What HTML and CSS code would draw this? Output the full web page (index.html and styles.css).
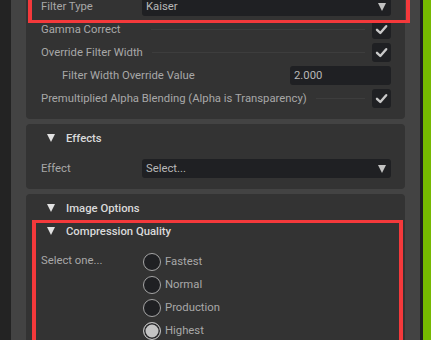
FILE: index.html
```html
<!DOCTYPE html>
<html lang="en">

<head>
    <meta charset="UTF-8">
    <meta name="viewport" content="width=device-width, initial-scale=1.0">
    <title>Texture Settings</title>
    <link rel="stylesheet" href="styles.css">
</head>

<body>

    <div id="app">
        <div class="edge-dark"></div>

        <!-- Property panel -->
        <div id="frame">

            <!-- Filter settings -->
            <div class="card card-filter">
                <div class="row">
                    <span class="label">Filter Type</span>
                    <div class="combo"><span>Kaiser</span><span class="arrow"></span></div>
                </div>
                <div class="row">
                    <span class="label">Gamma Correct</span>
                    <span class="rule"></span>
                    <span class="check">
                        <svg width="19" height="19" viewBox="0 0 19 19"><path d="M5 9.8 L8.3 13 L14.2 6.2" fill="none" stroke="#c9c9c9" stroke-width="2.4" stroke-linecap="round" stroke-linejoin="round"/></svg>
                    </span>
                </div>
                <div class="row">
                    <span class="label">Override Filter Width</span>
                    <span class="rule"></span>
                    <span class="check">
                        <svg width="19" height="19" viewBox="0 0 19 19"><path d="M5 9.8 L8.3 13 L14.2 6.2" fill="none" stroke="#c9c9c9" stroke-width="2.4" stroke-linecap="round" stroke-linejoin="round"/></svg>
                    </span>
                </div>
                <div class="row">
                    <span class="label indent">Filter Width Override Value</span>
                    <span class="spacer"></span>
                    <div class="field">2.000</div>
                </div>
                <div class="row">
                    <span class="label">Premultiplied Alpha Blending (Alpha is Transparency)</span>
                    <span class="rule"></span>
                    <span class="check">
                        <svg width="19" height="19" viewBox="0 0 19 19"><path d="M5 9.8 L8.3 13 L14.2 6.2" fill="none" stroke="#c9c9c9" stroke-width="2.4" stroke-linecap="round" stroke-linejoin="round"/></svg>
                    </span>
                </div>
                <div class="highlight hl-filter"></div>
            </div>

            <!-- Effects -->
            <div class="card">
                <div class="header"><span class="tri"></span>Effects</div>
                <div class="row">
                    <span class="label">Effect</span>
                    <div class="combo"><span>Select...</span><span class="arrow"></span></div>
                </div>
            </div>

            <!-- Image options -->
            <div class="card card-image">
                <div class="header"><span class="tri"></span>Image Options</div>
                <div class="header sub"><span class="tri"></span>Compression Quality</div>
                <div class="choice">
                    <span class="label top">Select one...</span>
                    <div class="radios">
                        <div class="radio-row"><span class="radio"></span>Fastest</div>
                        <div class="radio-row"><span class="radio"></span>Normal</div>
                        <div class="radio-row"><span class="radio"></span>Production</div>
                        <div class="radio-row"><span class="radio on"></span>Highest</div>
                    </div>
                </div>
                <div class="highlight hl-quality"></div>
            </div>

        </div>

        <div class="edge-gap"></div>
        <div class="edge-green"></div>
    </div>

</body>

</html>
```

FILE: styles.css
```css
body {
    margin: 0;
    font-family: Roboto, "Liberation Sans", sans-serif;
    font-size: 11.3px;
    background-color: #232323;
    overflow: hidden;
}

#app {
    display: flex;
    height: 340px;
    overflow: hidden;
}

.edge-dark {
    width: 11px;
    background-color: #232323;
}

#frame {
    flex: 1;
    background-color: #434343;
    padding: 0 15px;
    display: flex;
    flex-direction: column;
    gap: 5px;
}

.edge-gap {
    width: 3px;
    background-color: #1e1e20;
}

.edge-green {
    width: 8px;
    background-color: #76b900;
}

/* Cards */
.card {
    position: relative;
    background-color: #333333;
    border-radius: 4px;
    padding: 4px 14px 11px 15px;
    display: flex;
    flex-direction: column;
    gap: 4px;
    flex-shrink: 0;
}

.card-filter {
    margin-top: -7px;
}

.row {
    display: flex;
    align-items: center;
    height: 19px;
}

.label {
    color: #a8a8a8;
    width: 101px;
    flex-shrink: 0;
    white-space: nowrap;
}

.row .label {
    width: auto;
    min-width: 101px;
}

.label.indent {
    padding-left: 21px;
}

.rule {
    flex: 1;
    height: 1px;
    background-color: #3d3d3d;
    margin: 0 7px 0 9px;
}

.spacer {
    flex: 1;
}

.check {
    width: 19px;
    height: 19px;
    border-radius: 3px;
    background-color: #1f2023;
    display: flex;
}

.combo {
    flex: 1;
    height: 19px;
    border-radius: 3px;
    background-color: #1f2023;
    color: #b8b8b8;
    display: flex;
    align-items: center;
    justify-content: space-between;
    padding: 0 5px 0 4px;
}

.arrow {
    width: 0;
    height: 0;
    border-left: 4.5px solid transparent;
    border-right: 4.5px solid transparent;
    border-top: 8px solid #c2c2c2;
}

.field {
    width: 97px;
    height: 19px;
    border-radius: 3px;
    background-color: #1f2023;
    color: #b8b8b8;
    padding-left: 4px;
    line-height: 19px;
}

/* Collapsible headers */
.header {
    display: flex;
    align-items: center;
    height: 20px;
    color: #dadada;
    font-weight: 500;
    margin-bottom: 7px;
}

.header.sub {
    margin-top: -8px;
}

.tri {
    width: 0;
    height: 0;
    margin: 0 11px 0 6px;
    border-left: 4px solid transparent;
    border-right: 4px solid transparent;
    border-top: 8px solid #e2e2e2;
}

/* Radio group */
.choice {
    display: flex;
}

.label.top {
    line-height: 16px;
    padding-top: 1px;
}

.radios {
    display: flex;
    flex-direction: column;
    gap: 4px;
    padding-left: 1px;
}

.radio-row {
    display: flex;
    align-items: center;
    height: 19px;
    color: #a8a8a8;
}

.radio {
    width: 18px;
    height: 18px;
    box-sizing: border-box;
    border-radius: 50%;
    border: 1.5px solid #a5a5a5;
    background-color: #1f2023;
    margin-right: 4px;
}

.radio.on {
    background-color: #c4c4c4;
    box-shadow: inset 0 0 0 1.5px #2a2a2c;
    border-color: #bdbdbd;
}

/* Red annotation boxes */
.highlight {
    position: absolute;
    box-sizing: border-box;
    border: 3px solid #f4393b;
    border-left-width: 4px;
    border-right-width: 4px;
}

.hl-filter {
    left: 2px;
    right: -5px;
    top: -20px;
    height: 50px;
}

.hl-quality {
    left: 6px;
    right: 2px;
    top: 26px;
    height: 200px;
}
```
